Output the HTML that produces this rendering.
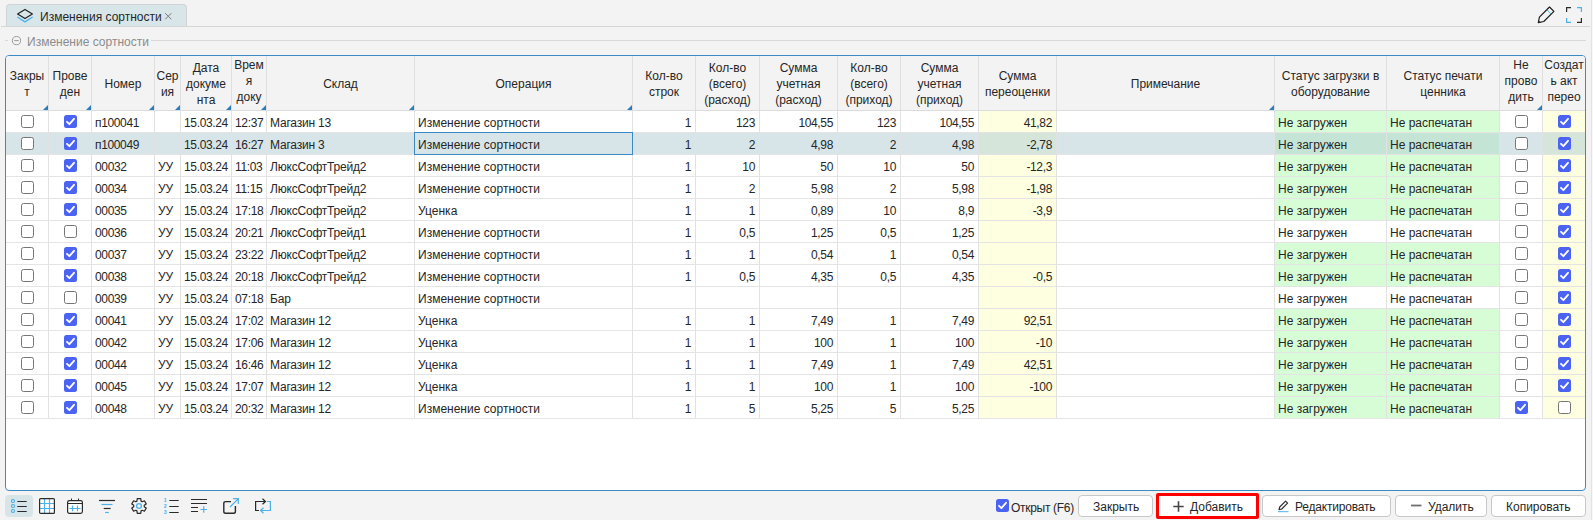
<!DOCTYPE html>
<html lang="ru"><head><meta charset="utf-8"><title>Изменения сортности</title>
<style>
*{box-sizing:border-box;margin:0;padding:0}
html,body{width:1593px;height:520px;overflow:hidden;background:#f3f3f3}
body{position:relative;font-family:"Liberation Sans",sans-serif;font-size:12px;color:#262626;line-height:16px}
.abs{position:absolute}
#tab{left:6px;top:4px;width:181px;height:23px;background:#d8e6ea;border:1px solid #d0d4d6;border-bottom:none;border-radius:4px 4px 0 0}
#tab .t{position:absolute;left:33px;top:4px;white-space:nowrap;font-size:12px}
#tab .x{position:absolute;left:157px;top:7px}
#tabline{left:1px;top:26px;width:1589px;height:1px;background:#d6d6d6}
.gl{height:1px;background:#d9d9d9;top:40px}
#gtitle{left:27px;top:34px;color:#8c8c8c;white-space:nowrap}
#grid{left:5px;top:55px;width:1581px;height:436px;border:1px solid #3b8ac4;border-radius:4px;background:#fff;overflow:hidden}
#hdr{left:0;top:0;width:1579px;height:54px;background:#f3f3f3}
#hline{left:0;top:54px;width:1579px;height:1px;background:#dcdcdc}
.hc{position:absolute;top:0;height:54px;display:flex;align-items:center;justify-content:center;text-align:center;line-height:16px;padding-top:1px;white-space:nowrap}
.hs{position:absolute;top:0;width:1px;height:54px;background:#dfdfdf}
.tri{position:absolute;top:49px;width:0;height:0;border-left:5px solid transparent;border-bottom:5px solid #2b7cba}
.row{position:absolute;left:0;width:1579px;height:22px}
.row.sel{background:#d7e5e9}
.rl{position:absolute;left:0;width:1579px;height:1px;background:#e4e4e4}
.vs{position:absolute;width:1px;background:#e2e2e2}
.c{position:absolute;top:0;height:21px;line-height:21px;white-space:nowrap;overflow:hidden;padding:2px 4px 0 3px}
.c.r{text-align:right;letter-spacing:-0.35px;padding-right:4px}
.c.s{letter-spacing:-0.2px}
.c.n{letter-spacing:-0.35px}
.y{background:#feffe0}.g{background:#d6fdd6}
.sel .y{background:#d5e5d9}.sel .g{background:#c4e5d6}
.cb{position:absolute;width:13px;height:13px;border:1px solid #767676;border-radius:2.5px;background:#fff}
.cb.on{border:none;background:#4a63f2}
.cb.on svg{position:absolute;left:0;top:0}
#focus{border:1px solid #3b8ac4}
.btn{position:absolute;top:495px;height:22px;background:#fff;border:1px solid #c8c8c8;border-radius:4px;white-space:nowrap}
.btn span{position:absolute;top:3px}
.ico{position:absolute}
</style></head><body>

<div id="tab" class="abs">
<svg class="ico" style="left:9px;top:3px" width="18" height="16" viewBox="0 0 18 16"><path d="M9 1.4 L16.4 6 L9 10.6 L1.6 6 Z" fill="none" stroke="#1f1f1f" stroke-width="1.15" stroke-linejoin="round"/><path d="M1.8 9.3 L9 13.9 L16.2 9.3" fill="none" stroke="#4db1ea" stroke-width="1.35" stroke-linecap="round" stroke-linejoin="round"/></svg>
<div class="t">Изменения сортности</div>
<svg class="x" width="9" height="9" viewBox="0 0 9 9"><path d="M1.2 1.2 L7.3 7.3 M7.3 1.2 L1.2 7.3" stroke="#7a7a7a" stroke-width="1" fill="none"/></svg>
</div>
<div id="tabline" class="abs"></div>
<svg class="ico" style="left:1537px;top:6px" width="18" height="18" viewBox="0 0 18 18"><path d="M1.3 16.6 L2.4 11.1 L12.5 1 L16.9 5.4 L6.8 15.5 Z" fill="none" stroke="#1a1a1a" stroke-width="1.15" stroke-linejoin="round"/><path d="M9.9 3.8 L14.2 8.1" stroke="#4db1ea" stroke-width="1" fill="none"/><path d="M1.3 16.6 L1.7 14.4 L3.5 16.2 Z" fill="#2a2a2a"/></svg>
<svg class="ico" style="left:1566px;top:7px" width="16" height="16" viewBox="0 0 16 16"><path d="M0.6 5 V0.6 H5" fill="none" stroke="#2a2a2a" stroke-width="1.2"/><path d="M11 15.4 H15.4 V11" fill="none" stroke="#2a2a2a" stroke-width="1.2"/><path d="M11 0.6 H15.4 V5" fill="none" stroke="#4db1ea" stroke-width="1.2"/><path d="M0.6 11 V15.4 H5" fill="none" stroke="#4db1ea" stroke-width="1.2"/></svg>
<div class="abs gl" style="left:5px;width:3px"></div>
<div class="abs gl" style="left:151px;width:1435px"></div>
<svg class="ico" style="left:11px;top:35px" width="12" height="12" viewBox="0 0 12 12"><circle cx="5.5" cy="5.6" r="4.1" fill="none" stroke="#9a9a9a" stroke-width="1"/><path d="M3.2 5.6 H7.8" stroke="#9a9a9a" stroke-width="1"/></svg>
<div id="gtitle" class="abs">Изменение сортности</div>
<div id="grid" class="abs">
<div id="hdr" class="abs"></div>
<div class="hc" style="left:0px;width:42px">Закры<br>т</div>
<div class="hs" style="left:42px"></div>
<div class="tri" style="left:37px"></div>
<div class="hc" style="left:43px;width:42px">Прове<br>ден</div>
<div class="hs" style="left:85px"></div>
<div class="tri" style="left:80px"></div>
<div class="hc" style="left:86px;width:62px">Номер</div>
<div class="hs" style="left:148px"></div>
<div class="tri" style="left:143px"></div>
<div class="hc" style="left:149px;width:25px">Сер<br>ия</div>
<div class="hs" style="left:174px"></div>
<div class="tri" style="left:169px"></div>
<div class="hc" style="left:175px;width:50px">Дата<br>докуме<br>нта</div>
<div class="hs" style="left:225px"></div>
<div class="tri" style="left:220px"></div>
<div class="hc" style="left:226px;width:34px;margin-top:-3px">Врем<br>я<br>доку</div>
<div class="hs" style="left:260px"></div>
<div class="tri" style="left:255px"></div>
<div class="hc" style="left:261px;width:147px">Склад</div>
<div class="hs" style="left:408px"></div>
<div class="tri" style="left:403px"></div>
<div class="hc" style="left:409px;width:217px">Операция</div>
<div class="hs" style="left:626px"></div>
<div class="tri" style="left:621px"></div>
<div class="hc" style="left:627px;width:62px">Кол-во<br>строк</div>
<div class="hs" style="left:689px"></div>
<div class="hc" style="left:690px;width:63px">Кол-во<br>(всего)<br>(расход)</div>
<div class="hs" style="left:753px"></div>
<div class="hc" style="left:754px;width:77px">Сумма<br>учетная<br>(расход)</div>
<div class="hs" style="left:831px"></div>
<div class="hc" style="left:832px;width:62px">Кол-во<br>(всего)<br>(приход)</div>
<div class="hs" style="left:894px"></div>
<div class="hc" style="left:895px;width:77px">Сумма<br>учетная<br>(приход)</div>
<div class="hs" style="left:972px"></div>
<div class="hc" style="left:973px;width:77px">Сумма<br>переоценки</div>
<div class="hs" style="left:1050px"></div>
<div class="hc" style="left:1051px;width:217px">Примечание</div>
<div class="hs" style="left:1268px"></div>
<div class="tri" style="left:1263px"></div>
<div class="hc" style="left:1269px;width:111px">Статус загрузки в<br>оборудование</div>
<div class="hs" style="left:1380px"></div>
<div class="hc" style="left:1381px;width:112px">Статус печати<br>ценника</div>
<div class="hs" style="left:1493px"></div>
<div class="hc" style="left:1494px;width:42px;margin-top:-3px">Не<br>прово<br>дить</div>
<div class="hs" style="left:1536px"></div>
<div class="tri" style="left:1531px"></div>
<div class="hc" style="left:1537px;width:42px;margin-top:-3px">Создат<br>ь акт<br>перео</div>
<div id="hline" class="abs"></div>
<div class="row" style="top:55px">
<div class="c r y" style="left:973px;width:77px">41,82</div>
<div class="c g" style="left:1269px;width:111px">Не загружен</div>
<div class="c g" style="left:1381px;width:112px">Не распечатан</div>
<div class="c y" style="left:1537px;width:42px"></div>
<div class="cb" style="left:15px;top:4px"></div>
<div class="cb on" style="left:58px;top:4px"><svg width="13" height="13" viewBox="0 0 13 13"><path d="M3 6.8 L5.4 9.2 L10 3.8" fill="none" stroke="#fff" stroke-width="1.8" stroke-linecap="round" stroke-linejoin="round"/></svg></div>
<div class="c n" style="left:86px;width:62px">п100041</div>
<div class="c " style="left:149px;width:25px"></div>
<div class="c n" style="left:175px;width:50px">15.03.24</div>
<div class="c n" style="left:226px;width:34px">12:37</div>
<div class="c s" style="left:261px;width:147px">Магазин 13</div>
<div class="c " style="left:409px;width:217px">Изменение сортности</div>
<div class="c r" style="left:627px;width:62px">1</div>
<div class="c r" style="left:690px;width:63px">123</div>
<div class="c r" style="left:754px;width:77px">104,55</div>
<div class="c r" style="left:832px;width:62px">123</div>
<div class="c r" style="left:895px;width:77px">104,55</div>
<div class="cb" style="left:1509px;top:4px"></div>
<div class="cb on" style="left:1552px;top:4px"><svg width="13" height="13" viewBox="0 0 13 13"><path d="M3 6.8 L5.4 9.2 L10 3.8" fill="none" stroke="#fff" stroke-width="1.8" stroke-linecap="round" stroke-linejoin="round"/></svg></div>
</div>
<div class="rl" style="top:76px"></div>
<div class="row sel" style="top:77px">
<div class="c r y" style="left:973px;width:77px">-2,78</div>
<div class="c g" style="left:1269px;width:111px">Не загружен</div>
<div class="c g" style="left:1381px;width:112px">Не распечатан</div>
<div class="c y" style="left:1537px;width:42px"></div>
<div class="cb" style="left:15px;top:4px"></div>
<div class="cb on" style="left:58px;top:4px"><svg width="13" height="13" viewBox="0 0 13 13"><path d="M3 6.8 L5.4 9.2 L10 3.8" fill="none" stroke="#fff" stroke-width="1.8" stroke-linecap="round" stroke-linejoin="round"/></svg></div>
<div class="c n" style="left:86px;width:62px">п100049</div>
<div class="c " style="left:149px;width:25px"></div>
<div class="c n" style="left:175px;width:50px">15.03.24</div>
<div class="c n" style="left:226px;width:34px">16:27</div>
<div class="c s" style="left:261px;width:147px">Магазин 3</div>
<div class="c " style="left:409px;width:217px">Изменение сортности</div>
<div class="c r" style="left:627px;width:62px">1</div>
<div class="c r" style="left:690px;width:63px">2</div>
<div class="c r" style="left:754px;width:77px">4,98</div>
<div class="c r" style="left:832px;width:62px">2</div>
<div class="c r" style="left:895px;width:77px">4,98</div>
<div class="cb" style="left:1509px;top:4px"></div>
<div class="cb on" style="left:1552px;top:4px"><svg width="13" height="13" viewBox="0 0 13 13"><path d="M3 6.8 L5.4 9.2 L10 3.8" fill="none" stroke="#fff" stroke-width="1.8" stroke-linecap="round" stroke-linejoin="round"/></svg></div>
</div>
<div class="rl" style="top:98px"></div>
<div class="row" style="top:99px">
<div class="c r y" style="left:973px;width:77px">-12,3</div>
<div class="c g" style="left:1269px;width:111px">Не загружен</div>
<div class="c g" style="left:1381px;width:112px">Не распечатан</div>
<div class="c y" style="left:1537px;width:42px"></div>
<div class="cb" style="left:15px;top:4px"></div>
<div class="cb on" style="left:58px;top:4px"><svg width="13" height="13" viewBox="0 0 13 13"><path d="M3 6.8 L5.4 9.2 L10 3.8" fill="none" stroke="#fff" stroke-width="1.8" stroke-linecap="round" stroke-linejoin="round"/></svg></div>
<div class="c n" style="left:86px;width:62px">00032</div>
<div class="c " style="left:149px;width:25px">УУ</div>
<div class="c n" style="left:175px;width:50px">15.03.24</div>
<div class="c n" style="left:226px;width:34px">11:03</div>
<div class="c s" style="left:261px;width:147px">ЛюксСофтТрейд2</div>
<div class="c " style="left:409px;width:217px">Изменение сортности</div>
<div class="c r" style="left:627px;width:62px">1</div>
<div class="c r" style="left:690px;width:63px">10</div>
<div class="c r" style="left:754px;width:77px">50</div>
<div class="c r" style="left:832px;width:62px">10</div>
<div class="c r" style="left:895px;width:77px">50</div>
<div class="cb" style="left:1509px;top:4px"></div>
<div class="cb on" style="left:1552px;top:4px"><svg width="13" height="13" viewBox="0 0 13 13"><path d="M3 6.8 L5.4 9.2 L10 3.8" fill="none" stroke="#fff" stroke-width="1.8" stroke-linecap="round" stroke-linejoin="round"/></svg></div>
</div>
<div class="rl" style="top:120px"></div>
<div class="row" style="top:121px">
<div class="c r y" style="left:973px;width:77px">-1,98</div>
<div class="c g" style="left:1269px;width:111px">Не загружен</div>
<div class="c g" style="left:1381px;width:112px">Не распечатан</div>
<div class="c y" style="left:1537px;width:42px"></div>
<div class="cb" style="left:15px;top:4px"></div>
<div class="cb on" style="left:58px;top:4px"><svg width="13" height="13" viewBox="0 0 13 13"><path d="M3 6.8 L5.4 9.2 L10 3.8" fill="none" stroke="#fff" stroke-width="1.8" stroke-linecap="round" stroke-linejoin="round"/></svg></div>
<div class="c n" style="left:86px;width:62px">00034</div>
<div class="c " style="left:149px;width:25px">УУ</div>
<div class="c n" style="left:175px;width:50px">15.03.24</div>
<div class="c n" style="left:226px;width:34px">11:15</div>
<div class="c s" style="left:261px;width:147px">ЛюксСофтТрейд2</div>
<div class="c " style="left:409px;width:217px">Изменение сортности</div>
<div class="c r" style="left:627px;width:62px">1</div>
<div class="c r" style="left:690px;width:63px">2</div>
<div class="c r" style="left:754px;width:77px">5,98</div>
<div class="c r" style="left:832px;width:62px">2</div>
<div class="c r" style="left:895px;width:77px">5,98</div>
<div class="cb" style="left:1509px;top:4px"></div>
<div class="cb on" style="left:1552px;top:4px"><svg width="13" height="13" viewBox="0 0 13 13"><path d="M3 6.8 L5.4 9.2 L10 3.8" fill="none" stroke="#fff" stroke-width="1.8" stroke-linecap="round" stroke-linejoin="round"/></svg></div>
</div>
<div class="rl" style="top:142px"></div>
<div class="row" style="top:143px">
<div class="c r y" style="left:973px;width:77px">-3,9</div>
<div class="c g" style="left:1269px;width:111px">Не загружен</div>
<div class="c g" style="left:1381px;width:112px">Не распечатан</div>
<div class="c y" style="left:1537px;width:42px"></div>
<div class="cb" style="left:15px;top:4px"></div>
<div class="cb on" style="left:58px;top:4px"><svg width="13" height="13" viewBox="0 0 13 13"><path d="M3 6.8 L5.4 9.2 L10 3.8" fill="none" stroke="#fff" stroke-width="1.8" stroke-linecap="round" stroke-linejoin="round"/></svg></div>
<div class="c n" style="left:86px;width:62px">00035</div>
<div class="c " style="left:149px;width:25px">УУ</div>
<div class="c n" style="left:175px;width:50px">15.03.24</div>
<div class="c n" style="left:226px;width:34px">17:18</div>
<div class="c s" style="left:261px;width:147px">ЛюксСофтТрейд2</div>
<div class="c " style="left:409px;width:217px">Уценка</div>
<div class="c r" style="left:627px;width:62px">1</div>
<div class="c r" style="left:690px;width:63px">1</div>
<div class="c r" style="left:754px;width:77px">0,89</div>
<div class="c r" style="left:832px;width:62px">10</div>
<div class="c r" style="left:895px;width:77px">8,9</div>
<div class="cb" style="left:1509px;top:4px"></div>
<div class="cb on" style="left:1552px;top:4px"><svg width="13" height="13" viewBox="0 0 13 13"><path d="M3 6.8 L5.4 9.2 L10 3.8" fill="none" stroke="#fff" stroke-width="1.8" stroke-linecap="round" stroke-linejoin="round"/></svg></div>
</div>
<div class="rl" style="top:164px"></div>
<div class="row" style="top:165px">
<div class="c r y" style="left:973px;width:77px"></div>
<div class="c " style="left:1269px;width:111px">Не загружен</div>
<div class="c " style="left:1381px;width:112px">Не распечатан</div>
<div class="c y" style="left:1537px;width:42px"></div>
<div class="cb" style="left:15px;top:4px"></div>
<div class="cb" style="left:58px;top:4px"></div>
<div class="c n" style="left:86px;width:62px">00036</div>
<div class="c " style="left:149px;width:25px">УУ</div>
<div class="c n" style="left:175px;width:50px">15.03.24</div>
<div class="c n" style="left:226px;width:34px">20:21</div>
<div class="c s" style="left:261px;width:147px">ЛюксСофтТрейд1</div>
<div class="c " style="left:409px;width:217px">Изменение сортности</div>
<div class="c r" style="left:627px;width:62px">1</div>
<div class="c r" style="left:690px;width:63px">0,5</div>
<div class="c r" style="left:754px;width:77px">1,25</div>
<div class="c r" style="left:832px;width:62px">0,5</div>
<div class="c r" style="left:895px;width:77px">1,25</div>
<div class="cb" style="left:1509px;top:4px"></div>
<div class="cb on" style="left:1552px;top:4px"><svg width="13" height="13" viewBox="0 0 13 13"><path d="M3 6.8 L5.4 9.2 L10 3.8" fill="none" stroke="#fff" stroke-width="1.8" stroke-linecap="round" stroke-linejoin="round"/></svg></div>
</div>
<div class="rl" style="top:186px"></div>
<div class="row" style="top:187px">
<div class="c r y" style="left:973px;width:77px"></div>
<div class="c g" style="left:1269px;width:111px">Не загружен</div>
<div class="c g" style="left:1381px;width:112px">Не распечатан</div>
<div class="c y" style="left:1537px;width:42px"></div>
<div class="cb" style="left:15px;top:4px"></div>
<div class="cb on" style="left:58px;top:4px"><svg width="13" height="13" viewBox="0 0 13 13"><path d="M3 6.8 L5.4 9.2 L10 3.8" fill="none" stroke="#fff" stroke-width="1.8" stroke-linecap="round" stroke-linejoin="round"/></svg></div>
<div class="c n" style="left:86px;width:62px">00037</div>
<div class="c " style="left:149px;width:25px">УУ</div>
<div class="c n" style="left:175px;width:50px">15.03.24</div>
<div class="c n" style="left:226px;width:34px">23:22</div>
<div class="c s" style="left:261px;width:147px">ЛюксСофтТрейд2</div>
<div class="c " style="left:409px;width:217px">Изменение сортности</div>
<div class="c r" style="left:627px;width:62px">1</div>
<div class="c r" style="left:690px;width:63px">1</div>
<div class="c r" style="left:754px;width:77px">0,54</div>
<div class="c r" style="left:832px;width:62px">1</div>
<div class="c r" style="left:895px;width:77px">0,54</div>
<div class="cb" style="left:1509px;top:4px"></div>
<div class="cb on" style="left:1552px;top:4px"><svg width="13" height="13" viewBox="0 0 13 13"><path d="M3 6.8 L5.4 9.2 L10 3.8" fill="none" stroke="#fff" stroke-width="1.8" stroke-linecap="round" stroke-linejoin="round"/></svg></div>
</div>
<div class="rl" style="top:208px"></div>
<div class="row" style="top:209px">
<div class="c r y" style="left:973px;width:77px">-0,5</div>
<div class="c g" style="left:1269px;width:111px">Не загружен</div>
<div class="c g" style="left:1381px;width:112px">Не распечатан</div>
<div class="c y" style="left:1537px;width:42px"></div>
<div class="cb" style="left:15px;top:4px"></div>
<div class="cb on" style="left:58px;top:4px"><svg width="13" height="13" viewBox="0 0 13 13"><path d="M3 6.8 L5.4 9.2 L10 3.8" fill="none" stroke="#fff" stroke-width="1.8" stroke-linecap="round" stroke-linejoin="round"/></svg></div>
<div class="c n" style="left:86px;width:62px">00038</div>
<div class="c " style="left:149px;width:25px">УУ</div>
<div class="c n" style="left:175px;width:50px">15.03.24</div>
<div class="c n" style="left:226px;width:34px">20:18</div>
<div class="c s" style="left:261px;width:147px">ЛюксСофтТрейд2</div>
<div class="c " style="left:409px;width:217px">Изменение сортности</div>
<div class="c r" style="left:627px;width:62px">1</div>
<div class="c r" style="left:690px;width:63px">0,5</div>
<div class="c r" style="left:754px;width:77px">4,35</div>
<div class="c r" style="left:832px;width:62px">0,5</div>
<div class="c r" style="left:895px;width:77px">4,35</div>
<div class="cb" style="left:1509px;top:4px"></div>
<div class="cb on" style="left:1552px;top:4px"><svg width="13" height="13" viewBox="0 0 13 13"><path d="M3 6.8 L5.4 9.2 L10 3.8" fill="none" stroke="#fff" stroke-width="1.8" stroke-linecap="round" stroke-linejoin="round"/></svg></div>
</div>
<div class="rl" style="top:230px"></div>
<div class="row" style="top:231px">
<div class="c r y" style="left:973px;width:77px"></div>
<div class="c " style="left:1269px;width:111px">Не загружен</div>
<div class="c " style="left:1381px;width:112px">Не распечатан</div>
<div class="c y" style="left:1537px;width:42px"></div>
<div class="cb" style="left:15px;top:4px"></div>
<div class="cb" style="left:58px;top:4px"></div>
<div class="c n" style="left:86px;width:62px">00039</div>
<div class="c " style="left:149px;width:25px">УУ</div>
<div class="c n" style="left:175px;width:50px">15.03.24</div>
<div class="c n" style="left:226px;width:34px">07:18</div>
<div class="c s" style="left:261px;width:147px">Бар</div>
<div class="c " style="left:409px;width:217px">Изменение сортности</div>
<div class="c r" style="left:627px;width:62px"></div>
<div class="c r" style="left:690px;width:63px"></div>
<div class="c r" style="left:754px;width:77px"></div>
<div class="c r" style="left:832px;width:62px"></div>
<div class="c r" style="left:895px;width:77px"></div>
<div class="cb" style="left:1509px;top:4px"></div>
<div class="cb on" style="left:1552px;top:4px"><svg width="13" height="13" viewBox="0 0 13 13"><path d="M3 6.8 L5.4 9.2 L10 3.8" fill="none" stroke="#fff" stroke-width="1.8" stroke-linecap="round" stroke-linejoin="round"/></svg></div>
</div>
<div class="rl" style="top:252px"></div>
<div class="row" style="top:253px">
<div class="c r y" style="left:973px;width:77px">92,51</div>
<div class="c g" style="left:1269px;width:111px">Не загружен</div>
<div class="c g" style="left:1381px;width:112px">Не распечатан</div>
<div class="c y" style="left:1537px;width:42px"></div>
<div class="cb" style="left:15px;top:4px"></div>
<div class="cb on" style="left:58px;top:4px"><svg width="13" height="13" viewBox="0 0 13 13"><path d="M3 6.8 L5.4 9.2 L10 3.8" fill="none" stroke="#fff" stroke-width="1.8" stroke-linecap="round" stroke-linejoin="round"/></svg></div>
<div class="c n" style="left:86px;width:62px">00041</div>
<div class="c " style="left:149px;width:25px">УУ</div>
<div class="c n" style="left:175px;width:50px">15.03.24</div>
<div class="c n" style="left:226px;width:34px">17:02</div>
<div class="c s" style="left:261px;width:147px">Магазин 12</div>
<div class="c " style="left:409px;width:217px">Уценка</div>
<div class="c r" style="left:627px;width:62px">1</div>
<div class="c r" style="left:690px;width:63px">1</div>
<div class="c r" style="left:754px;width:77px">7,49</div>
<div class="c r" style="left:832px;width:62px">1</div>
<div class="c r" style="left:895px;width:77px">7,49</div>
<div class="cb" style="left:1509px;top:4px"></div>
<div class="cb on" style="left:1552px;top:4px"><svg width="13" height="13" viewBox="0 0 13 13"><path d="M3 6.8 L5.4 9.2 L10 3.8" fill="none" stroke="#fff" stroke-width="1.8" stroke-linecap="round" stroke-linejoin="round"/></svg></div>
</div>
<div class="rl" style="top:274px"></div>
<div class="row" style="top:275px">
<div class="c r y" style="left:973px;width:77px">-10</div>
<div class="c g" style="left:1269px;width:111px">Не загружен</div>
<div class="c g" style="left:1381px;width:112px">Не распечатан</div>
<div class="c y" style="left:1537px;width:42px"></div>
<div class="cb" style="left:15px;top:4px"></div>
<div class="cb on" style="left:58px;top:4px"><svg width="13" height="13" viewBox="0 0 13 13"><path d="M3 6.8 L5.4 9.2 L10 3.8" fill="none" stroke="#fff" stroke-width="1.8" stroke-linecap="round" stroke-linejoin="round"/></svg></div>
<div class="c n" style="left:86px;width:62px">00042</div>
<div class="c " style="left:149px;width:25px">УУ</div>
<div class="c n" style="left:175px;width:50px">15.03.24</div>
<div class="c n" style="left:226px;width:34px">17:06</div>
<div class="c s" style="left:261px;width:147px">Магазин 12</div>
<div class="c " style="left:409px;width:217px">Уценка</div>
<div class="c r" style="left:627px;width:62px">1</div>
<div class="c r" style="left:690px;width:63px">1</div>
<div class="c r" style="left:754px;width:77px">100</div>
<div class="c r" style="left:832px;width:62px">1</div>
<div class="c r" style="left:895px;width:77px">100</div>
<div class="cb" style="left:1509px;top:4px"></div>
<div class="cb on" style="left:1552px;top:4px"><svg width="13" height="13" viewBox="0 0 13 13"><path d="M3 6.8 L5.4 9.2 L10 3.8" fill="none" stroke="#fff" stroke-width="1.8" stroke-linecap="round" stroke-linejoin="round"/></svg></div>
</div>
<div class="rl" style="top:296px"></div>
<div class="row" style="top:297px">
<div class="c r y" style="left:973px;width:77px">42,51</div>
<div class="c g" style="left:1269px;width:111px">Не загружен</div>
<div class="c g" style="left:1381px;width:112px">Не распечатан</div>
<div class="c y" style="left:1537px;width:42px"></div>
<div class="cb" style="left:15px;top:4px"></div>
<div class="cb on" style="left:58px;top:4px"><svg width="13" height="13" viewBox="0 0 13 13"><path d="M3 6.8 L5.4 9.2 L10 3.8" fill="none" stroke="#fff" stroke-width="1.8" stroke-linecap="round" stroke-linejoin="round"/></svg></div>
<div class="c n" style="left:86px;width:62px">00044</div>
<div class="c " style="left:149px;width:25px">УУ</div>
<div class="c n" style="left:175px;width:50px">15.03.24</div>
<div class="c n" style="left:226px;width:34px">16:46</div>
<div class="c s" style="left:261px;width:147px">Магазин 12</div>
<div class="c " style="left:409px;width:217px">Уценка</div>
<div class="c r" style="left:627px;width:62px">1</div>
<div class="c r" style="left:690px;width:63px">1</div>
<div class="c r" style="left:754px;width:77px">7,49</div>
<div class="c r" style="left:832px;width:62px">1</div>
<div class="c r" style="left:895px;width:77px">7,49</div>
<div class="cb" style="left:1509px;top:4px"></div>
<div class="cb on" style="left:1552px;top:4px"><svg width="13" height="13" viewBox="0 0 13 13"><path d="M3 6.8 L5.4 9.2 L10 3.8" fill="none" stroke="#fff" stroke-width="1.8" stroke-linecap="round" stroke-linejoin="round"/></svg></div>
</div>
<div class="rl" style="top:318px"></div>
<div class="row" style="top:319px">
<div class="c r y" style="left:973px;width:77px">-100</div>
<div class="c g" style="left:1269px;width:111px">Не загружен</div>
<div class="c g" style="left:1381px;width:112px">Не распечатан</div>
<div class="c y" style="left:1537px;width:42px"></div>
<div class="cb" style="left:15px;top:4px"></div>
<div class="cb on" style="left:58px;top:4px"><svg width="13" height="13" viewBox="0 0 13 13"><path d="M3 6.8 L5.4 9.2 L10 3.8" fill="none" stroke="#fff" stroke-width="1.8" stroke-linecap="round" stroke-linejoin="round"/></svg></div>
<div class="c n" style="left:86px;width:62px">00045</div>
<div class="c " style="left:149px;width:25px">УУ</div>
<div class="c n" style="left:175px;width:50px">15.03.24</div>
<div class="c n" style="left:226px;width:34px">17:07</div>
<div class="c s" style="left:261px;width:147px">Магазин 12</div>
<div class="c " style="left:409px;width:217px">Уценка</div>
<div class="c r" style="left:627px;width:62px">1</div>
<div class="c r" style="left:690px;width:63px">1</div>
<div class="c r" style="left:754px;width:77px">100</div>
<div class="c r" style="left:832px;width:62px">1</div>
<div class="c r" style="left:895px;width:77px">100</div>
<div class="cb" style="left:1509px;top:4px"></div>
<div class="cb on" style="left:1552px;top:4px"><svg width="13" height="13" viewBox="0 0 13 13"><path d="M3 6.8 L5.4 9.2 L10 3.8" fill="none" stroke="#fff" stroke-width="1.8" stroke-linecap="round" stroke-linejoin="round"/></svg></div>
</div>
<div class="rl" style="top:340px"></div>
<div class="row" style="top:341px">
<div class="c r y" style="left:973px;width:77px"></div>
<div class="c g" style="left:1269px;width:111px">Не загружен</div>
<div class="c g" style="left:1381px;width:112px">Не распечатан</div>
<div class="c y" style="left:1537px;width:42px"></div>
<div class="cb" style="left:15px;top:4px"></div>
<div class="cb on" style="left:58px;top:4px"><svg width="13" height="13" viewBox="0 0 13 13"><path d="M3 6.8 L5.4 9.2 L10 3.8" fill="none" stroke="#fff" stroke-width="1.8" stroke-linecap="round" stroke-linejoin="round"/></svg></div>
<div class="c n" style="left:86px;width:62px">00048</div>
<div class="c " style="left:149px;width:25px">УУ</div>
<div class="c n" style="left:175px;width:50px">15.03.24</div>
<div class="c n" style="left:226px;width:34px">20:32</div>
<div class="c s" style="left:261px;width:147px">Магазин 12</div>
<div class="c " style="left:409px;width:217px">Изменение сортности</div>
<div class="c r" style="left:627px;width:62px">1</div>
<div class="c r" style="left:690px;width:63px">5</div>
<div class="c r" style="left:754px;width:77px">5,25</div>
<div class="c r" style="left:832px;width:62px">5</div>
<div class="c r" style="left:895px;width:77px">5,25</div>
<div class="cb on" style="left:1509px;top:4px"><svg width="13" height="13" viewBox="0 0 13 13"><path d="M3 6.8 L5.4 9.2 L10 3.8" fill="none" stroke="#fff" stroke-width="1.8" stroke-linecap="round" stroke-linejoin="round"/></svg></div>
<div class="cb" style="left:1552px;top:4px"></div>
</div>
<div class="rl" style="top:362px"></div>
<div class="vs" style="left:42px;top:55px;height:308px"></div>
<div class="vs" style="left:85px;top:55px;height:308px"></div>
<div class="vs" style="left:148px;top:55px;height:308px"></div>
<div class="vs" style="left:174px;top:55px;height:308px"></div>
<div class="vs" style="left:225px;top:55px;height:308px"></div>
<div class="vs" style="left:260px;top:55px;height:308px"></div>
<div class="vs" style="left:408px;top:55px;height:308px"></div>
<div class="vs" style="left:626px;top:55px;height:308px"></div>
<div class="vs" style="left:689px;top:55px;height:308px"></div>
<div class="vs" style="left:753px;top:55px;height:308px"></div>
<div class="vs" style="left:831px;top:55px;height:308px"></div>
<div class="vs" style="left:894px;top:55px;height:308px"></div>
<div class="vs" style="left:972px;top:55px;height:308px"></div>
<div class="vs" style="left:1050px;top:55px;height:308px"></div>
<div class="vs" style="left:1268px;top:55px;height:308px"></div>
<div class="vs" style="left:1380px;top:55px;height:308px"></div>
<div class="vs" style="left:1493px;top:55px;height:308px"></div>
<div class="vs" style="left:1536px;top:55px;height:308px"></div>
<div id="focus" class="abs" style="left:408px;top:76px;width:219px;height:23px"></div>
</div>
<div class="abs" style="left:5px;top:495px;width:28px;height:22px;border-radius:4px;background:#d7e5e9"></div>
<svg class="ico" style="left:11px;top:498px" width="16" height="16" viewBox="0 0 16 16"><g fill="none" stroke="#4db1ea" stroke-width="1.1"><circle cx="2" cy="3" r="1.55"/><circle cx="2" cy="8" r="1.55"/><circle cx="2" cy="13" r="1.55"/></g><path d="M6.3 3.5 H15.7 M6.3 8.5 H15.7 M6.3 13.5 H15.7" stroke="#2a2a2a" stroke-width="1.2"/></svg>
<svg class="ico" style="left:39px;top:498px" width="16" height="16" viewBox="0 0 16 16"><rect x="0.6" y="0.6" width="14.8" height="14.8" rx="1" fill="#fff"/><path d="M5.5 1 V15 M10.5 1 V15 M1 5.5 H15 M1 10.5 H15" stroke="#4db1ea" stroke-width="1.2"/><rect x="0.6" y="0.6" width="14.8" height="14.8" rx="1" fill="none" stroke="#2a2a2a" stroke-width="1.2"/></svg>
<svg class="ico" style="left:67px;top:498px" width="16" height="16" viewBox="0 0 16 16"><rect x="0.6" y="2.6" width="14.8" height="12.8" rx="1.8" fill="#fff" stroke="#2a2a2a" stroke-width="1.2"/><path d="M4.5 0.5 V3 M11.5 0.5 V3 M1 5.5 H15" fill="none" stroke="#2a2a2a" stroke-width="1"/><path d="M2.4 10.5 H13.6 M5.5 7.6 V13.2 M10.5 7.6 V13.2" stroke="#4db1ea" stroke-width="1.2"/></svg>
<svg class="ico" style="left:99px;top:498px" width="16" height="16" viewBox="0 0 16 16"><path d="M0 2.5 H16" stroke="#2a2a2a" stroke-width="1.2"/><path d="M2.5 6.5 H13.5" stroke="#4db1ea" stroke-width="1.2"/><path d="M4.7 10.5 H11.6" stroke="#2a2a2a" stroke-width="1.2"/><path d="M6.2 14.5 H9.8" stroke="#4db1ea" stroke-width="1.2"/></svg>
<svg class="ico" style="left:131px;top:498px" width="16" height="16" viewBox="0 0 16 16"><path d="M6.22 0.71 L9.78 0.71 L10.06 3.12 L11.20 3.77 L13.42 2.81 L15.20 5.90 L13.26 7.35 L13.26 8.65 L15.20 10.10 L13.42 13.19 L11.20 12.23 L10.06 12.88 L9.78 15.29 L6.22 15.29 L5.94 12.88 L4.80 12.23 L2.58 13.19 L0.80 10.10 L2.74 8.65 L2.74 7.35 L0.80 5.90 L2.58 2.81 L4.80 3.77 L5.94 3.12 Z" fill="none" stroke="#2a2a2a" stroke-width="1.2" stroke-linejoin="round"/><circle cx="8" cy="8" r="2.4" fill="none" stroke="#4db1ea" stroke-width="1.3"/></svg>
<svg class="ico" style="left:163px;top:498px" width="16" height="16" viewBox="0 0 16 16"><text x="0.8" y="4.2" font-size="5.3" font-weight="bold" fill="#4db1ea" font-family="Liberation Sans, sans-serif">1</text><text x="0.8" y="9.9" font-size="5.3" font-weight="bold" fill="#4db1ea" font-family="Liberation Sans, sans-serif">2</text><text x="0.8" y="15.8" font-size="5.3" font-weight="bold" fill="#4db1ea" font-family="Liberation Sans, sans-serif">3</text><path d="M6.3 2.5 H15.7 M6.3 8.5 H15.7 M6.3 14.5 H15.7" stroke="#2a2a2a" stroke-width="1.2"/></svg>
<svg class="ico" style="left:191px;top:498px" width="16" height="16" viewBox="0 0 16 16"><path d="M0 1.5 H16 M0 5.5 H16 M0 9.5 H7 M0 13.5 H7" stroke="#2a2a2a" stroke-width="1.2"/><path d="M9.5 11.5 H16 M12.75 8.2 V14.8" stroke="#4db1ea" stroke-width="1.2"/></svg>
<svg class="ico" style="left:223px;top:498px" width="16" height="16" viewBox="0 0 16 16"><path d="M8 3.6 H2.6 Q0.8 3.6 0.8 5.4 V13.4 Q0.8 15.2 2.6 15.2 H10.6 Q12.4 15.2 12.4 13.4 V8" fill="none" stroke="#2a2a2a" stroke-width="1.4"/><path d="M7 9 L15.2 0.8 M10 0.7 H15.3 V6" fill="none" stroke="#4db1ea" stroke-width="1.2"/></svg>
<svg class="ico" style="left:255px;top:498px" width="16" height="16" viewBox="0 0 16 16"><path d="M4 12.5 H0.6 V3.5 H10" fill="none" stroke="#2a2a2a" stroke-width="1.2"/><path d="M7.5 0.7 L10.5 3.5 L7.5 6.3" fill="none" stroke="#2a2a2a" stroke-width="1.2"/><path d="M12 3.5 H15.4 V12.5 H6" fill="none" stroke="#4db1ea" stroke-width="1.2"/><path d="M8.5 9.7 L5.5 12.5 L8.5 15.3" fill="none" stroke="#4db1ea" stroke-width="1.2"/></svg>
<div class="cb on" style="left:996px;top:499px"><svg width="13" height="13" viewBox="0 0 13 13"><path d="M3 6.8 L5.4 9.2 L10 3.8" fill="none" stroke="#fff" stroke-width="1.8" stroke-linecap="round" stroke-linejoin="round"/></svg></div>
<div class="abs" style="left:1011px;top:500px;white-space:nowrap;letter-spacing:-0.3px">Открыт (F6)</div>
<div class="btn" style="left:1078px;width:75px"><span style="left:14px">Закрыть</span></div>
<div class="abs" style="left:1156px;top:493px;width:103px;height:26px;border:3px solid #f00;border-radius:2px;background:#fff"></div>
<svg class="ico" style="left:1173px;top:501px" width="11" height="11" viewBox="0 0 11 11"><path d="M5.5 0.3 V10.7 M0.3 5.5 H10.7" stroke="#444" stroke-width="1.6"/></svg>
<div class="abs" style="left:1190px;top:499px;white-space:nowrap">Добавить</div>
<div class="btn" style="left:1262px;width:129px"><span style="left:32px;letter-spacing:-0.2px">Редактировать</span><svg class="ico" style="left:14px;top:4px" width="13" height="13" viewBox="0 0 13 13"><path d="M2 9.6 L2.7 7 L8.6 1.1 L10.6 3.1 L4.7 9 Z" fill="none" stroke="#2a2a2a" stroke-width="1.1" stroke-linejoin="round"/><path d="M1 11.7 H11.5" stroke="#4db1ea" stroke-width="1"/></svg></div>
<div class="btn" style="left:1395px;width:92px"><span style="left:32px">Удалить</span><svg class="ico" style="left:15px;top:8px" width="11" height="3" viewBox="0 0 11 3"><path d="M0 1.5 H10.5" stroke="#707070" stroke-width="1.8"/></svg></div>
<div class="btn" style="left:1491px;width:95px"><span style="left:14px">Копировать</span></div>
<div class="abs" style="left:1591px;top:0;width:1px;height:520px;background:#e3e3e3"></div><div class="abs" style="left:1592px;top:0;width:1px;height:520px;background:#f8f8f8"></div>
</body></html>
